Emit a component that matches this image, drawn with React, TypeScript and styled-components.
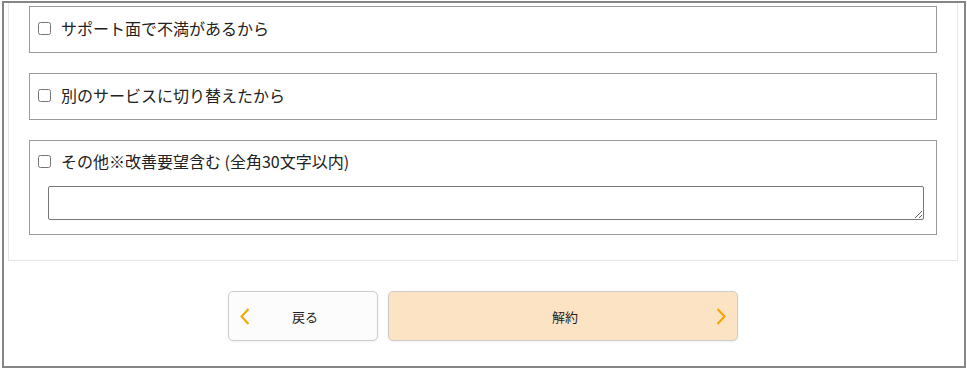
import React from 'react';
import styled, { createGlobalStyle } from 'styled-components';

const GlobalStyle = createGlobalStyle`
    html, body {
        margin: 0;
        padding: 0;
        background: #ffffff;
    }
    body {
        font-family: "Noto Sans CJK JP", "Noto Sans", sans-serif;
        color: #222222;
    }
`

const Frame = styled.div`
    box-sizing: border-box;
    width: 964px;
    height: 367px;
    margin: 1px 0 0 2px;
    border: 2px solid #868686;
    padding: 0 6px 0 4px;
    overflow: hidden;
`

const Card = styled.div`
    box-sizing: border-box;
    width: 950px;
    border: 1px solid #e6e6e6;
    border-top: none;
    padding: 3px 20px 25px;
    display: flex;
    flex-direction: column;
    gap: 20px;
`

const ReasonBox = styled.div`
    border: 1px solid #9a9a9a;
    padding: 0 12px 0 8px;
`

const ReasonRow = styled.label<{ tall?: boolean }>`
    box-sizing: border-box;
    display: flex;
    align-items: center;
    gap: 10px;
    height: ${props => props.tall ? '20px' : '45px'};
    margin-top: ${props => props.tall ? '10px' : '0'};
    padding-bottom: ${props => props.tall ? '0' : '3px'};
    font-size: 16px;
    line-height: 20px;
    color: #222222;

    & input {
        margin: 0;
        width: 13px;
        height: 13px;
    }
`

const Comment = styled.textarea`
    display: block;
    box-sizing: border-box;
    width: 876px;
    height: 34px;
    margin: 15px 0 14px 10px;
    border: 1px solid #767676;
    border-radius: 2px;
    font-family: inherit;
`

const Actions = styled.div`
    display: flex;
    justify-content: center;
    gap: 10px;
    padding-top: 30px;
`

const ActionButton = styled.button<{ primary?: boolean }>`
    position: relative;
    box-sizing: border-box;
    width: ${props => props.primary ? '350px' : '150px'};
    height: 50px;
    border: 1px solid #cccccc;
    border-radius: 5px;
    background: ${props => props.primary ? '#fbe3c4' : '#fcfcfc'};
    box-shadow: 0 1px 3px rgba(0, 0, 0, 0.06);
    font-family: "Noto Sans CJK JP", sans-serif;
    font-size: 13px;
    color: #222222;
    display: flex;
    align-items: center;
    justify-content: center;
    padding: 0 0 0 ${props => props.primary ? '4px' : '4px'};
    cursor: pointer;
`

const Chevron = styled.svg<{ side: 'left' | 'right' }>`
    position: absolute;
    top: 16px;
    ${props => props.side === 'left' ? 'left: 11px;' : 'right: 11px;'}
`

const reasons = ['サポート面で不満があるから', '別のサービスに切り替えたから']

const App = () => {
    return (
        <>
            <GlobalStyle />
            <Frame>
                <Card>
                    {reasons.map(r => (
                        <ReasonBox key={r}>
                            <ReasonRow>
                                <input type="checkbox" />
                                {r}
                            </ReasonRow>
                        </ReasonBox>
                    ))}
                    <ReasonBox>
                        <ReasonRow tall>
                            <input type="checkbox" />
                            その他※改善要望含む (全角30文字以内)
                        </ReasonRow>
                        <Comment />
                    </ReasonBox>
                </Card>
                <Actions>
                    <ActionButton>
                        <Chevron side="left" width="10" height="17" viewBox="0 0 10 17">
                            <path d="M8.5 1 L1.5 8.5 L8.5 16" fill="none" stroke="#f5a500" strokeWidth="2" />
                        </Chevron>
                        戻る
                    </ActionButton>
                    <ActionButton primary>
                        解約
                        <Chevron side="right" width="10" height="17" viewBox="0 0 10 17">
                            <path d="M1.5 1 L8.5 8.5 L1.5 16" fill="none" stroke="#f5a500" strokeWidth="2" />
                        </Chevron>
                    </ActionButton>
                </Actions>
            </Frame>
        </>
    )
}

export default App
